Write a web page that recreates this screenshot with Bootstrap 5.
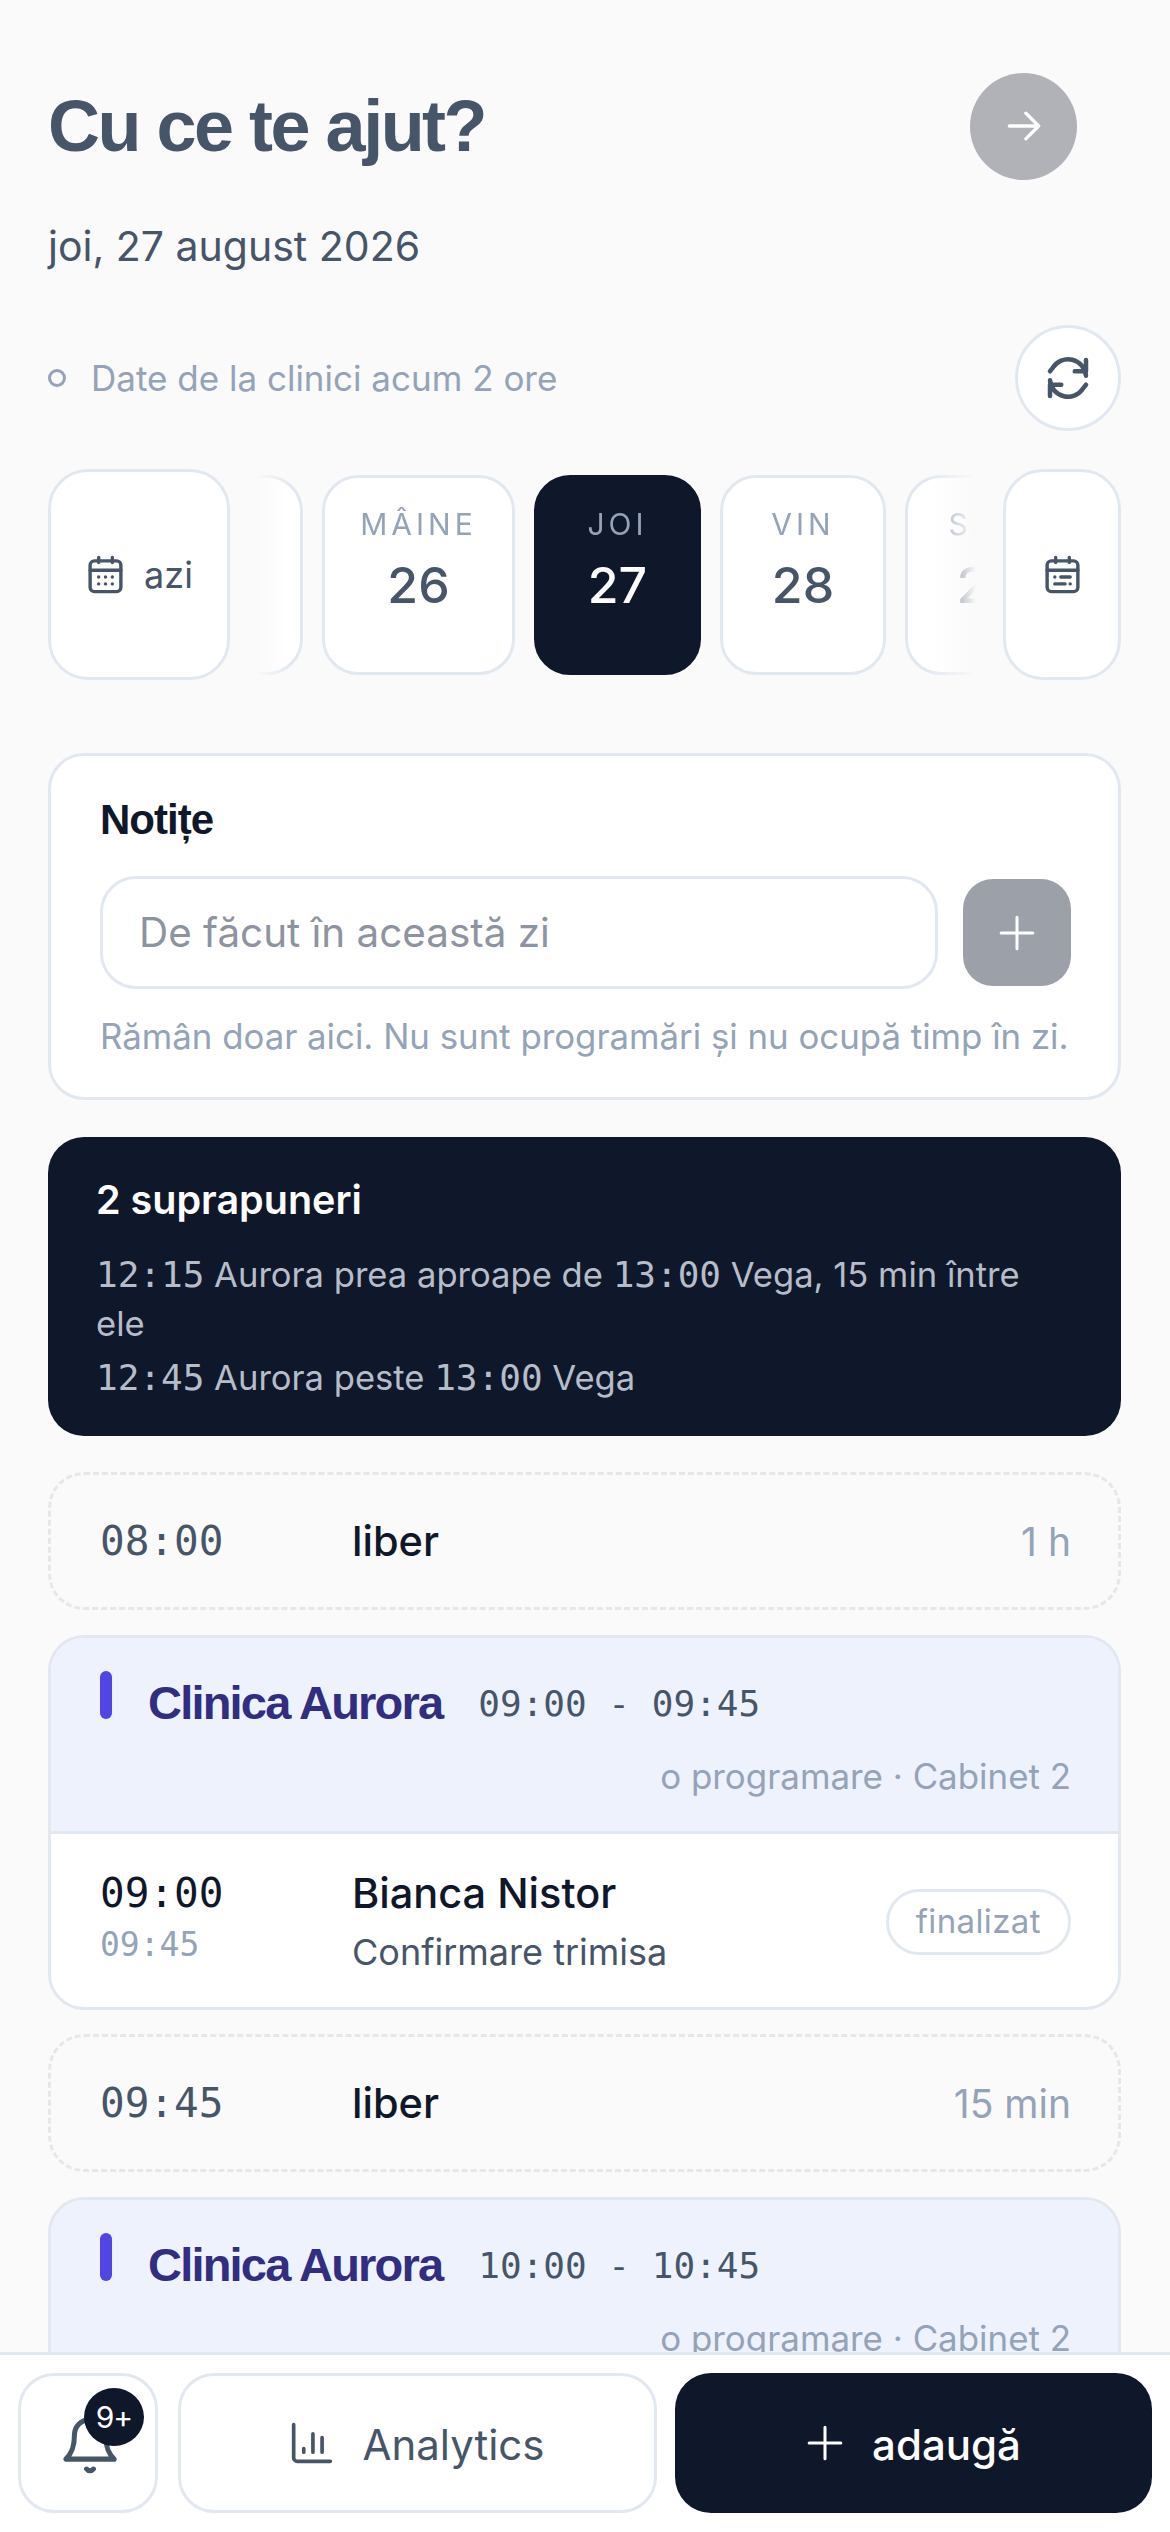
<!DOCTYPE html>
<html lang="ro">
<head>
    <meta charset="UTF-8">
    <meta name="viewport" content="width=device-width, initial-scale=1.0">
    <title>Cu ce te ajut?</title>
    <link rel="stylesheet" href="https://cdn.jsdelivr.net/npm/bootstrap@5.3.0/dist/css/bootstrap.min.css">
    <script src="https://cdn.jsdelivr.net/npm/bootstrap@5.3.0/dist/js/bootstrap.bundle.min.js"></script>
    <style>
        html, body { height: 2532px; overflow: hidden; }
        body {
            background: #fafafa;
            font-family: "Inter", "Liberation Sans", sans-serif;
            color: #0f172a;
        }
        svg { display: block; flex-shrink: 0; }
        .app-shell { height: 2532px; }
        .app-main { padding: 72px 49px 0 48px; min-height: 0; }

        .page-title {
            font-family: "Liberation Sans", sans-serif;
            font-weight: 700;
            font-size: 72px;
            letter-spacing: -2.5px;
            line-height: 108px;
            color: #475569;
            margin: 0;
        }
        .go-btn {
            width: 107px; height: 107px;
            margin-right: 44px;
            background: #b0b2b8;
            border-radius: 50%;
        }
        .page-date { margin-top: 41px; font-size: 41px; line-height: 50px; color: #475569; }
        .sync-row { margin-top: 54px; }
        .sync-dot { width: 18px; height: 18px; border: 3px solid #94a3b8; border-radius: 50%; margin-right: 25px; }
        .sync-text { font-size: 35px; color: #94a3b8; }
        .round-btn {
            width: 106px; height: 106px;
            background: #fff;
            border: 3px solid #e2e8f0;
            border-radius: 50%;
        }

        .day-strip { margin-top: 38px; height: 211px; }
        .side-card {
            height: 211px;
            background: #fff;
            border: 3px solid #e2e8f0;
            border-radius: 40px;
            flex-shrink: 0;
            color: #475569;
        }
        .today-card { width: 182px; font-size: 36px; gap: 18px; }
        .pick-card { width: 118px; }
        .day-scroll {
            width: 720px;
            margin: 0 27px 0 26px;
            overflow: hidden;
            -webkit-mask-image: linear-gradient(to right, transparent 0, #000 34px, #000 672px, transparent 720px);
            mask-image: linear-gradient(to right, transparent 0, #000 34px, #000 672px, transparent 720px);
        }
        .day-track { gap: 19px; }
        .day-card {
            height: 200px;
            flex-shrink: 0;
            background: #fff;
            border: 3px solid #e2e8f0;
            border-radius: 36px;
            color: #475569;
            padding-top: 26px;
            text-align: center;
        }
        .day-card.is-prev { width: 100px; margin-left: -53px; }
        .day-card.is-wide { width: 193px; }
        .day-card.is-vin { width: 166px; }
        .day-card.is-next { width: 166px; }
        .day-card.is-active { width: 167px; background: #0f172a; border-color: #0f172a; color: #fff; }
        .day-name { font-size: 30px; letter-spacing: 4px; line-height: 40px; color: #94a3b8; }
        .day-num { font-size: 50px; font-weight: 500; line-height: 60px; margin-top: 11px; }

        .notes-card {
            margin-top: 73px;
            height: 347px;
            background: #fff;
            border: 3px solid #e2e8f0;
            border-radius: 36px;
            padding: 39px 47px 0 49px;
        }
        .notes-title {
            font-family: "Liberation Sans", sans-serif;
            font-weight: 700;
            font-size: 42px;
            letter-spacing: -1px;
            line-height: 50px;
            margin: 0 0 31px;
        }
        .notes-input.form-control {
            height: 113px;
            border: 3px solid #e2e8f0;
            border-radius: 36px;
            font-size: 40.4px;
            padding: 0 36px;
            background: #fff;
        }
        .notes-input.form-control::placeholder { color: #8d93a0; opacity: 1; }
        .notes-add {
            width: 108px; height: 107px;
            margin-left: 25px;
            background: #9ca0a9;
            border-radius: 30px;
            flex-shrink: 0;
        }
        .notes-help { margin-top: 25px; font-size: 34.8px; line-height: 44px; color: #94a3b8; white-space: nowrap; }

        .overlap-box {
            margin-top: 37px;
            height: 299px;
            background: #0f172a;
            border-radius: 36px;
            padding: 40px 48px 0;
            color: #fff;
        }
        .overlap-title { font-size: 39.5px; font-weight: 600; line-height: 46px; margin-bottom: 27px; }
        .overlap-line { font-size: 34.6px; line-height: 48px; color: #b6bdc9; margin-bottom: 6px; }
        .overlap-line span { font-family: "DejaVu Sans Mono", monospace; font-size: 36px; }

        .free-row {
            height: 138px;
            border: 3px dashed #e5e7eb;
            border-radius: 36px;
            padding: 0 47px 0 49px;
        }
        .time-big {
            font-family: "DejaVu Sans Mono", monospace;
            font-size: 41px;
            line-height: 50px;
            width: 252px;
            color: #475569;
            flex-shrink: 0;
        }
        .time-big.is-start { color: #0f172a; }
        .client-name { font-size: 41.5px; font-weight: 500; line-height: 50px; color: #0f172a; }
        .free-len { font-size: 39px; color: #94a3b8; padding-top: 3px; }

        .clinic-card {
            background: #fff;
            border: 3px solid #e2e8f0;
            border-radius: 36px;
            overflow: hidden;
        }
        .clinic-head {
            height: 193px;
            background: #edf2fd;
            padding: 33px 47px 0 49px;
        }
        .clinic-bar { width: 12px; height: 48px; background: #4f46e5; border-radius: 6px; margin-right: 36px; }
        .clinic-name {
            font-family: "Liberation Sans", sans-serif;
            font-weight: 700;
            font-size: 47px;
            letter-spacing: -1.8px;
            line-height: 60px;
            color: #312e81;
            margin-right: 36px;
            margin-top: 2px;
        }
        .clinic-time { font-family: "DejaVu Sans Mono", monospace; font-size: 36px; color: #475569; white-space: pre; margin-top: 3px; line-height: 60px; }
        .clinic-meta { font-size: 34.9px; line-height: 46px; color: #94a3b8; text-align: right; margin-top: 19px; }
        .clinic-sep { border-top: 3px solid #e2e8f0; }
        .visit-row { height: 173px; padding: 0 47px 0 49px; }
        .visit-times { padding-bottom: 8px; }
        .time-end { font-family: "DejaVu Sans Mono", monospace; font-size: 33px; line-height: 40px; color: #94a3b8; margin-top: 7px; }
        .visit-note { font-size: 36px; line-height: 44px; color: #475569; margin-top: 12px; }
        .status-pill {
            height: 66px;
            padding: 0 27px;
            border: 3px solid #e2e8f0;
            border-radius: 33px;
            font-size: 33px;
            letter-spacing: .4px;
            color: #94a3b8;
            margin-top: 2px;
        }
        .stack-gap-a { margin-top: 36px; }
        .stack-gap-b { margin-top: 25px; }
        .stack-gap-c { margin-top: 24px; }

        .bottom-bar {
            height: 180px;
            flex-shrink: 0;
            background: #fff;
            border-top: 3px solid #e2e8f0;
            padding: 18px 18px 0;
            gap: 20px;
            position: relative;
        }
        .bar-btn {
            height: 140px;
            background: #fff;
            border: 3px solid #e2e8f0;
            border-radius: 36px;
            color: #475569;
            font-size: 42px;
        }
        .bell-btn { width: 140px; position: relative; }
        .bell-icon { margin: 4px 0 0 4px; }
        .bell-badge {
            position: absolute;
            left: 63px; top: 12px;
            width: 60px; height: 58px;
            background: #0f172a;
            color: #fff;
            border-radius: 50%;
            font-size: 30px;
            letter-spacing: -1px;
        }
        .analytics-btn { width: 479px; gap: 28px; }
        .analytics-btn span, .add-btn span { padding-top: 3px; }
        .add-btn {
            width: 477px; height: 140px;
            margin-left: -2px;
            background: #0f172a;
            border-radius: 36px;
            color: #fff;
            font-size: 42px;
            font-weight: 500;
            gap: 28px;
        }
    </style>
</head>
<body>
<div class="app-shell d-flex flex-column">
    <div class="app-main flex-grow-1 overflow-hidden">

        <div class="d-flex justify-content-between align-items-center">
            <h1 class="page-title">Cu ce te ajut?</h1>
            <div class="go-btn d-flex align-items-center justify-content-center">
                <svg width="44" height="44" viewBox="0 0 24 24" fill="none" stroke="#fff" stroke-width="1.8" stroke-linecap="round" stroke-linejoin="round"><path d="M4 12h16M13 5l7 7-7 7"/></svg>
            </div>
        </div>
        <div class="page-date">joi, 27 august 2026</div>

        <div class="sync-row d-flex align-items-center">
            <span class="sync-dot"></span>
            <span class="sync-text flex-grow-1">Date de la clinici acum 2 ore</span>
            <div class="round-btn d-flex align-items-center justify-content-center">
                <svg width="54" height="54" viewBox="0 0 24 24" fill="none" stroke="#475569" stroke-width="2" stroke-linecap="round" stroke-linejoin="round"><path d="M20 11A8 8 0 0 0 5.200 7.500L4 9"/><path d="M20 4v5h-5"/><path d="M4 13a8 8 0 0 0 14.800 3.500L20 15"/><path d="M4 20v-5h5"/></svg>
            </div>
        </div>

        <div class="day-strip d-flex align-items-center">
            <div class="side-card today-card d-flex align-items-center justify-content-center">
                <svg width="41" height="41" viewBox="0 0 24 24" fill="none" stroke="#475569" stroke-width="2" stroke-linecap="round" stroke-linejoin="round"><rect x="3" y="4" width="18" height="18" rx="2.500"/><path d="M3 9.500h18M8 2v3M16 2v3"/><path d="M8 13.500h.01M12 13.500h.01M16 13.500h.01M8 17.500h.01M12 17.500h.01M16 17.500h.01"/></svg>
                <span>azi</span>
            </div>
            <div class="day-scroll d-flex align-items-center">
                <div class="day-track d-flex">
                    <div class="day-card is-prev"></div>
                    <div class="day-card is-wide"><div class="day-name">MÂINE</div><div class="day-num">26</div></div>
                    <div class="day-card is-active"><div class="day-name">JOI</div><div class="day-num">27</div></div>
                    <div class="day-card is-vin"><div class="day-name">VIN</div><div class="day-num">28</div></div>
                    <div class="day-card is-next"><div class="day-name">SÂM</div><div class="day-num">29</div></div>
                </div>
            </div>
            <div class="side-card pick-card d-flex align-items-center justify-content-center">
                <svg width="41" height="41" viewBox="0 0 24 24" fill="none" stroke="#475569" stroke-width="2" stroke-linecap="round" stroke-linejoin="round"><rect x="3" y="4" width="18" height="18" rx="2.500"/><path d="M3 9.500h18M8 2v3M16 2v3"/><path d="M7.500 13.500h.01M11 13.500h5.500M7.500 17.500h6M16.500 17.500h.01"/></svg>
            </div>
        </div>

        <div class="notes-card">
            <h2 class="notes-title">Notițe</h2>
            <div class="d-flex align-items-center">
                <input class="notes-input form-control" type="text" placeholder="De făcut în această zi">
                <div class="notes-add d-flex align-items-center justify-content-center">
                    <svg width="38" height="38" viewBox="0 0 24 24" fill="none" stroke="#fff" stroke-width="1.900" stroke-linecap="round"><path d="M12 2v20M2 12h20"/></svg>
                </div>
            </div>
            <div class="notes-help">Rămân doar aici. Nu sunt programări și nu ocupă timp în zi.</div>
        </div>

        <div class="overlap-box">
            <div class="overlap-title">2 suprapuneri</div>
            <div class="overlap-line"><span>12:15</span> Aurora prea aproape de <span>13:00</span> Vega, 15 min între ele</div>
            <div class="overlap-line"><span>12:45</span> Aurora peste <span>13:00</span> Vega</div>
        </div>

        <div class="free-row stack-gap-a d-flex align-items-center">
            <div class="time-big">08:00</div>
            <div class="client-name flex-grow-1">liber</div>
            <div class="free-len">1 h</div>
        </div>

        <div class="clinic-card stack-gap-b">
            <div class="clinic-head">
                <div class="d-flex align-items-start">
                    <span class="clinic-bar"></span>
                    <span class="clinic-name">Clinica Aurora</span>
                    <span class="clinic-time">09:00 - 09:45</span>
                </div>
                <div class="clinic-meta">o programare · Cabinet 2</div>
            </div>
            <div class="clinic-sep"></div>
            <div class="visit-row d-flex align-items-center">
                <div class="visit-times flex-shrink-0">
                    <div class="time-big is-start">09:00</div>
                    <div class="time-end">09:45</div>
                </div>
                <div class="flex-grow-1">
                    <div class="client-name">Bianca Nistor</div>
                    <div class="visit-note">Confirmare trimisa</div>
                </div>
                <div class="status-pill d-flex align-items-center">finalizat</div>
            </div>
        </div>

        <div class="free-row stack-gap-c d-flex align-items-center">
            <div class="time-big">09:45</div>
            <div class="client-name flex-grow-1">liber</div>
            <div class="free-len">15 min</div>
        </div>

        <div class="clinic-card stack-gap-b">
            <div class="clinic-head">
                <div class="d-flex align-items-start">
                    <span class="clinic-bar"></span>
                    <span class="clinic-name">Clinica Aurora</span>
                    <span class="clinic-time">10:00 - 10:45</span>
                </div>
                <div class="clinic-meta">o programare · Cabinet 2</div>
            </div>
        </div>
    </div>

    <div class="bottom-bar d-flex align-items-start">
        <div class="bar-btn bell-btn d-flex align-items-center justify-content-center">
            <svg class="bell-icon" width="68" height="68" viewBox="0 0 24 24" fill="none" stroke="#475569" stroke-width="1.800" stroke-linecap="round" stroke-linejoin="round"><path d="M12 3a5.500 5.500 0 0 0-5.500 5.500c0 5-1.500 7-3 8.500h17c-1.500-1.500-3-3.500-3-8.500A5.500 5.500 0 0 0 12 3z"/><path d="M10.800 20.500a1.500 1.500 0 0 0 2.400 0"/></svg>
            <span class="bell-badge d-flex align-items-center justify-content-center">9+</span>
        </div>
        <div class="bar-btn analytics-btn d-flex align-items-center justify-content-center">
            <svg width="44" height="44" viewBox="0 0 24 24" fill="none" stroke="#475569" stroke-width="2" stroke-linecap="round" stroke-linejoin="round"><path d="M2 2v18a2 2 0 0 0 2 2h18"/><path d="M7.500 15v2M12.500 7v10M17.500 9v8"/></svg>
            <span>Analytics</span>
        </div>
        <div class="add-btn d-flex align-items-center justify-content-center">
            <svg width="38" height="38" viewBox="0 0 24 24" fill="none" stroke="#fff" stroke-width="1.900" stroke-linecap="round"><path d="M12 2v20M2 12h20"/></svg>
            <span>adaugă</span>
        </div>
    </div>
</div>
</body>
</html>
